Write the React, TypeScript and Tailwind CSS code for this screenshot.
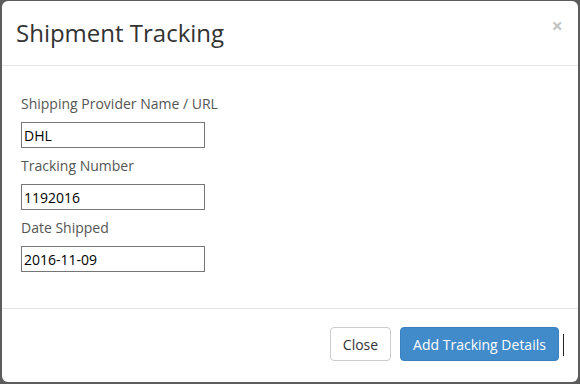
import React from "react";

const font = { fontFamily: '"Open Sans", "Liberation Sans", sans-serif' };

function Field({ label, value }: { label: string; value: string }) {
  return (
    <div className="mb-2">
      <label className="mb-2 block text-[14px] leading-5 text-[#555]">{label}</label>
      <input
        readOnly
        value={value}
        className="block h-[26px] w-[184px] border border-[#767676] bg-white px-[2px] text-[14px] text-black outline-none"
      />
    </div>
  );
}

export default function App() {
  return (
    <div className="h-[384px] w-[580px] bg-[#5c5c5c] pt-px pl-[2px]" style={font}>
      <div className="relative flex h-[381px] w-[576px] flex-col rounded-md bg-white">
        <div className="flex h-[65px] items-center justify-between border-b border-[#e5e5e5] pr-[15px] pl-[14px]">
          <h4 className="text-[24px] leading-none text-[#333]">Shipment Tracking</h4>
          <span className="-mt-[14px] text-[20px] leading-none font-bold text-[#c4c4c4]">×</span>
        </div>
        <div className="h-[243px] border-b border-[#e5e5e5] px-[19px] pt-[28px]">
          <Field label="Shipping Provider Name / URL" value="DHL" />
          <Field label="Tracking Number" value="1192016" />
          <Field label="Date Shipped" value="2016-11-09" />
        </div>
        <div className="flex flex-1 items-start justify-end gap-[9px] pt-[18px] pr-[19px]">
          <button className="h-[34px] w-[61px] rounded border border-[#ccc] bg-white text-[14px] text-[#333]">
            Close
          </button>
          <button className="h-[34px] w-[159px] rounded border border-[#3a7fc0] bg-[#428bca] text-[14px] text-white">
            Add Tracking Details
          </button>
        </div>
        <div className="absolute top-[333px] left-[561px] h-[22px] w-px bg-[#222]" />
      </div>
    </div>
  );
}
